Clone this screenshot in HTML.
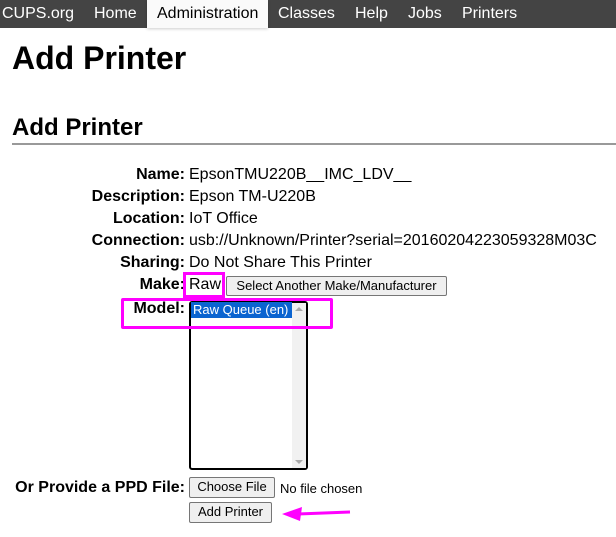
<!DOCTYPE html><html><head><style>
body{margin:0;width:616px;height:537px;overflow:hidden;background:#fff;font-family:"Liberation Sans",sans-serif;color:#000;position:relative}
.a{position:absolute;white-space:nowrap}
.nav{position:absolute;left:0;top:0;width:616px;height:28px;background:#444}
.nav span{position:absolute;top:5px;font-size:16px;color:#fff}
.l{position:absolute;right:431px;font-weight:bold;font-size:16px;white-space:nowrap}
.v{position:absolute;left:189px;font-size:16px;white-space:nowrap}
.btn{position:absolute;background:#efefef;border:1px solid #767676;border-radius:2px;font-size:13px;box-sizing:border-box;text-align:center;line-height:18px}
</style></head><body>
<div class="nav">
<span style="left:2px">CUPS.org</span>
<span style="left:94px">Home</span>
<div style="position:absolute;left:147px;top:0;width:121px;height:28px;background:#fafafa;box-shadow:0 1px 3px rgba(0,0,0,.2)"></div>
<span style="left:157px;color:#000">Administration</span>
<span style="left:278px">Classes</span>
<span style="left:355px">Help</span>
<span style="left:408px">Jobs</span>
<span style="left:462px">Printers</span>
</div>
<div class="a" style="left:12px;top:40px;font-size:32px;font-weight:bold">Add Printer</div>
<div class="a" style="left:12px;top:114px;font-size:24px;font-weight:bold">Add Printer</div>
<div class="a" style="left:12px;top:143px;width:604px;height:2px;background:#999"></div>
<div class="l" style="top:166px">Name:</div><div class="v" style="top:166px">EpsonTMU220B__IMC_LDV__</div>
<div class="l" style="top:188px">Description:</div><div class="v" style="top:188px">Epson TM-U220B</div>
<div class="l" style="top:210px">Location:</div><div class="v" style="top:210px">IoT Office</div>
<div class="l" style="top:232px">Connection:</div><div class="v" style="top:232px">usb://Unknown/Printer?serial=20160204223059328M03C</div>
<div class="l" style="top:254px">Sharing:</div><div class="v" style="top:254px">Do Not Share This Printer</div>
<div class="l" style="top:276px">Make:</div><div class="v" style="top:276px">Raw</div>
<div class="a" style="left:183px;top:272px;width:36px;height:20px;border:3px solid #f0f"></div>
<div class="btn" style="left:226px;top:276px;width:221px;height:20px">Select Another Make/Manufacturer</div>
<div class="l" style="top:300px">Model:</div>
<div class="a" style="left:189px;top:301px;width:119px;height:169px;border:2px solid #000;border-radius:3px;box-sizing:border-box;background:#fff"></div>
<div class="a" style="left:191px;top:302px;width:101px;height:16px;background:#0b64d0;color:#fff;font-size:13px;line-height:15px;padding-left:2px;box-sizing:border-box">Raw Queue (en)</div>
<div class="a" style="left:292px;top:303px;width:14px;height:165px;background:#f1f1f1"></div>
<div class="a" style="left:295px;top:307px;width:0;height:0;border-left:4px solid transparent;border-right:4px solid transparent;border-bottom:4px solid #aaa"></div>
<div class="a" style="left:295px;top:460px;width:0;height:0;border-left:4px solid transparent;border-right:4px solid transparent;border-top:4px solid #aaa"></div>
<div class="a" style="left:121px;top:298px;width:206px;height:25px;border:3px solid #f0f;border-radius:2px"></div>
<div class="l" style="top:479px">Or Provide a PPD File:</div>
<div class="btn" style="left:189px;top:477px;width:86px;height:21px">Choose File</div>
<div class="a" style="left:280px;top:481px;font-size:13px">No file chosen</div>
<div class="btn" style="left:189px;top:502px;width:83px;height:21px">Add Printer</div>
<svg class="a" style="left:280px;top:502px" width="75" height="22"><path d="M70 10 L18 12" stroke="#f0f" stroke-width="3"/><path d="M2 12 L22 5 L20 19 Z" fill="#f0f"/></svg>
</body></html>
